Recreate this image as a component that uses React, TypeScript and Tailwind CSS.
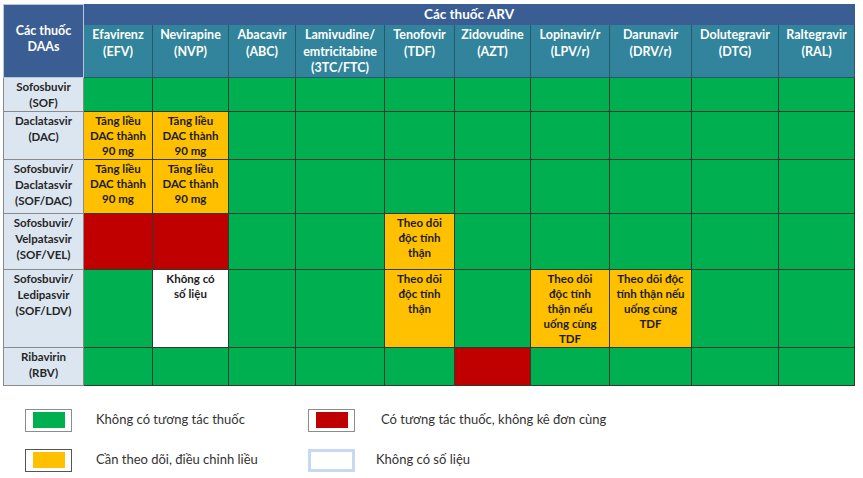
const arv = [
  ["Efavirenz", "(EFV)"],
  ["Nevirapine", "(NVP)"],
  ["Abacavir", "(ABC)"],
  ["Lamivudine/", "emtricitabine", "(3TC/FTC)"],
  ["Tenofovir", "(TDF)"],
  ["Zidovudine", "(AZT)"],
  ["Lopinavir/r", "(LPV/r)"],
  ["Darunavir", "(DRV/r)"],
  ["Dolutegravir", "(DTG)"],
  ["Raltegravir", "(RAL)"],
]

const colWidths = [80, 69, 76, 67, 89, 70, 76, 79, 82, 87, 76]

type Cell = { c: "g" | "y" | "r" | "w"; t?: string[] }

const G: Cell = { c: "g" }
const R: Cell = { c: "r" }
const dac: Cell = { c: "y", t: ["Tăng liều", "DAC thành", "90 mg"] }
const than: Cell = { c: "y", t: ["Theo dõi", "độc tính", "thận"] }

const rows: { name: string[]; h: string; cells: Cell[] }[] = [
  { name: ["Sofosbuvir", "(SOF)"], h: "h-[34px]", cells: [G, G, G, G, G, G, G, G, G, G] },
  { name: ["Daclatasvir", "(DAC)"], h: "h-[48px]", cells: [dac, dac, G, G, G, G, G, G, G, G] },
  { name: ["Sofosbuvir/", "Daclatasvir", "(SOF/DAC)"], h: "h-[54px]", cells: [dac, dac, G, G, G, G, G, G, G, G] },
  { name: ["Sofosbuvir/", "Velpatasvir", "(SOF/VEL)"], h: "h-[56px]", cells: [R, R, G, G, than, G, G, G, G, G] },
  {
    name: ["Sofosbuvir/", "Ledipasvir", "(SOF/LDV)"],
    h: "h-[78px]",
    cells: [
      G,
      { c: "w", t: ["Không có", "số liệu"] },
      G,
      G,
      than,
      G,
      { c: "y", t: ["Theo dõi", "độc tính", "thận nếu", "uống cùng", "TDF"] },
      { c: "y", t: ["Theo dõi độc", "tính thận nếu", "uống cùng", "TDF"] },
      G,
      G,
    ],
  },
  { name: ["Ribavirin", "(RBV)"], h: "h-[38px]", cells: [G, G, G, G, G, R, G, G, G, G] },
]

const bg = {
  g: "bg-[#00b050]",
  y: "bg-[#ffc000]",
  r: "bg-[#c00000]",
  w: "bg-white",
}

function Lines({ lines }: { lines: string[] }) {
  return (
    <>
      {lines.map((l, i) => (
        <span key={i} className="block whitespace-nowrap">
          {l}
        </span>
      ))}
    </>
  )
}

function Swatch({ color, frame }: { color: string; frame: string }) {
  return (
    <div className={`w-[47px] h-[23px] flex items-center justify-center ${frame}`}>
      <div className={`w-[32px] h-[16px] ${color}`} />
    </div>
  )
}

export default function App() {
  return (
    <div
      className="w-[863px] h-[478px] bg-white pl-[3px] pt-[4px] overflow-hidden"
      style={{ fontFamily: "Lato, 'Open Sans', 'Noto Sans', sans-serif" }}
    >
      <table className="table-fixed border-collapse w-[851px] text-[11.5px] font-bold leading-[15px]">
        <colgroup>
          {colWidths.map((w, i) => (
            <col key={i} style={{ width: w }} />
          ))}
        </colgroup>
        <thead>
          <tr className="h-[20px]">
            <th
              rowSpan={2}
              className="bg-[#3a5d94] border border-[#b9c6d8] text-white text-[12.5px] leading-[16px] align-middle pb-[4px]"
            >
              <Lines lines={["Các thuốc", "DAAs"]} />
            </th>
            <th colSpan={10} className="bg-[#3a5d94] border border-[#3a5d94] text-white text-[13.5px] align-middle">
              Các thuốc ARV
            </th>
          </tr>
          <tr className="h-[51px]">
            {arv.map((a, i) => (
              <th
                key={i}
                className="bg-[#31849b] border border-[#26596a] text-white text-[12.5px] leading-[16.5px] align-top pt-[2px]"
              >
                <Lines lines={a} />
              </th>
            ))}
          </tr>
        </thead>
        <tbody>
          {rows.map((r, i) => (
            <tr key={i} className={r.h}>
              <td className="bg-[#dce6f1] border border-[#8a8a8a] text-[#262626] text-center align-top pt-[1px] leading-[16px]">
                <Lines lines={r.name} />
              </td>
              {r.cells.map((c, j) => (
                <td
                  key={j}
                  className={`${bg[c.c]} border border-[#2f3b2f] text-[#1c1c1c] text-center align-top pt-[1px]`}
                >
                  {c.t && <Lines lines={c.t} />}
                </td>
              ))}
            </tr>
          ))}
        </tbody>
      </table>

      <div className="mt-[23px] ml-[22px] flex flex-col gap-[17px] text-[13px] text-[#333333]">
        <div className="flex items-center">
          <Swatch color="bg-[#00b050]" frame="border border-[#8c8c8c]" />
          <span className="ml-[24px] w-[212px]">Không có tương tác thuốc</span>
          <Swatch color="bg-[#c00000]" frame="border border-[#8c8c8c]" />
          <span className="ml-[26px]">Có tương tác thuốc, không kê đơn cùng</span>
        </div>
        <div className="flex items-center">
          <Swatch color="bg-[#ffc000]" frame="border border-[#555555]" />
          <span className="ml-[24px] w-[212px]">Cần theo dõi, điều chỉnh liều</span>
          <Swatch color="bg-white" frame="border-[3px] border-[#c5d9f1]" />
          <span className="ml-[21px]">Không có số liệu</span>
        </div>
      </div>
    </div>
  )
}
